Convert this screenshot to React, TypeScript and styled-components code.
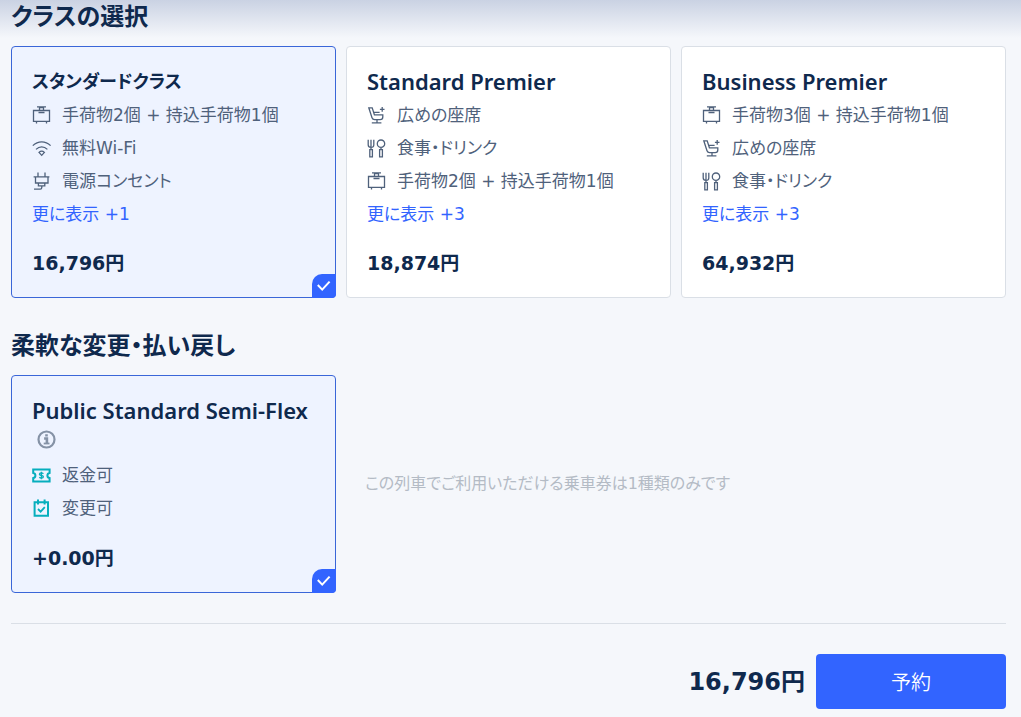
import React, { useState } from "react";
import styled, { createGlobalStyle } from "styled-components";

const navy = "#0f294d";
const slate = "#4f617b";
const blue = "#3264ff";
const teal = "#06aebd";

const GlobalStyle = createGlobalStyle`
  *, *::before, *::after { box-sizing: border-box; }
  body {
    margin: 0;
    background: #f5f7fb;
    color: ${navy};
    font-family: "DejaVu Sans", "Noto Sans CJK JP", sans-serif;
    font-feature-settings: "palt";
  }
  button { font: inherit; font-feature-settings: inherit; cursor: pointer; }
`;

const Page = styled.main`
  padding: 0 15px 8px 11px;
  background: linear-gradient(#cad2e3, #f5f7fb 38px);
`;

const Heading = styled.h2`
  margin: 0 0 13px;
  padding-top: 1px;
  font-size: 24px;
  line-height: 32px;
  font-weight: 700;
`;

const Section = styled.section`
  & + & {
    margin-top: 31px;
  }
`;

const Grid = styled.div`
  display: grid;
  grid-template-columns: repeat(3, minmax(0, 1fr));
  gap: 10px;
`;

const Card = styled.article<{ $selected: boolean }>`
  position: relative;
  display: flex;
  flex-direction: column;
  min-height: 218px;
  padding: 20px 20px 19px;
  border: 1px solid ${(p) => (p.$selected ? "#3a66d8" : "#dadfe6")};
  border-radius: 4px;
  background: ${(p) => (p.$selected ? "#eef3ff" : "#fff")};
`;

const CardTitle = styled.h3<{ $latin: boolean }>`
  display: flex;
  flex-wrap: wrap;
  margin: 0 0 4px;
  font-family: "Noto Sans", "Noto Sans CJK JP", sans-serif;
  font-size: ${(p) => (p.$latin ? 22 : 18)}px;
  line-height: 28px;
  font-weight: 600;
`;

const InfoButton = styled.button`
  display: flex;
  align-items: center;
  height: 31px;
  padding: 0 5px;
  border: 0;
  background: none;
  color: #8592a6;
`;

const Features = styled.ul`
  margin: 0;
  padding: 0;
  list-style: none;
`;

const Feature = styled.li<{ $accent?: boolean }>`
  display: flex;
  align-items: center;
  gap: 10px;
  height: 33px;
  font-size: 17px;
  line-height: 33px;
  color: ${slate};

  svg {
    flex: none;
    color: ${(p) => (p.$accent ? teal : slate)};
  }
`;

const MoreButton = styled.button`
  align-self: flex-start;
  height: 33px;
  padding: 0;
  border: 0;
  background: none;
  color: ${blue};
  font-size: 17px;
  line-height: 33px;
`;

const Price = styled.p`
  margin: auto 0 0;
  padding-top: 17px;
  font-size: 19px;
  line-height: 30px;
  font-weight: 700;
`;

const Tick = styled.div`
  position: absolute;
  right: -1px;
  bottom: -1px;
  display: grid;
  width: 24px;
  height: 24px;

  > * {
    grid-area: 1 / 1;
  }

  svg {
    place-self: center;
    color: #fff;
    pointer-events: none;
  }
`;

const Radio = styled.input`
  appearance: none;
  width: 24px;
  height: 24px;
  margin: 0;
  border-radius: 10px 0 4px 0;
  cursor: pointer;

  &:checked {
    background: ${blue};
  }
`;

const Note = styled.p`
  grid-column: 2 / -1;
  align-self: center;
  margin: 0;
  padding-left: 19px;
  font-size: 16px;
  line-height: 28px;
  color: #b4bbc5;
`;

const Footer = styled.footer`
  display: flex;
  justify-content: flex-end;
  align-items: center;
  gap: 11px;
  margin-top: 30px;
  padding-top: 30px;
  border-top: 1px solid #dadfe6;
`;

const Total = styled.strong`
  font-size: 24px;
  line-height: 32px;
  font-weight: 700;
`;

const BookButton = styled.button`
  width: 190px;
  height: 55px;
  border: 0;
  border-radius: 4px;
  background: ${blue};
  color: #fff;
  font-size: 20px;
  font-weight: 350;
`;

type IconName = "bag" | "wifi" | "plug" | "seat" | "meal" | "refund" | "change";

const drawings: Record<IconName, React.ReactNode> = {
  bag: (
    <>
      <path d="M1.500 4.500h16v10.800h-16z" />
      <path d="M7.500 4.500V1.500h4v3M5 .9h9M6.500 6.500h6M4.500 15.300v2.200M14.500 15.300v2.200" />
    </>
  ),
  wifi: (
    <>
      <path d="M.8 6.600C6 1.600 13.400 1.600 18.600 6.600M4 10.400c3.400-3.200 8-3.200 11.400 0" />
      <path d="M7 13.400c1.600-1.500 3.800-1.500 5.400 0L9.700 16.400z" />
    </>
  ),
  plug: (
    <>
      <path d="M6 .6v4.400M13 .6v4.400M1.600 4.800h15.800M3.500 4.800v6.200h12.500V4.800" />
      <path d="M6.400 11v2.800h6.400V11M9.800 13.800v1.800c0 1-.6 1.600-1.600 1.600H2" />
    </>
  ),
  seat: (
    <>
      <path d="M1.800 1.800h3.400l2.200 7h8.400v2.200c0 1.600-1 2.600-2.600 2.600H7.600c-1.400 0-2.200-.6-2.600-1.800z" />
      <path d="M6.600 6.400h6M15.200 1v4.800M12.900 3.400h4.600M10 13.600v2.800M4.800 16.800h9.600" />
    </>
  ),
  meal: (
    <>
      <path d="M1.200.8v5c0 1.600.8 2.600 2.800 2.600s2.800-1 2.800-2.600v-5M4 .8v9.600M2.800 10.600h2.600v7.200H2.800z" />
      <path d="M14 1a3.700 3.700 0 1 1 0 7.400A3.700 3.700 0 0 1 14 1zM14 8.400v2.200M12.600 10.600h2.800v7.200h-2.800z" />
    </>
  ),
  refund: (
    <>
      <path
        strokeWidth="2"
        d="M1.200 3.500h16.400v3.400c-1.400.2-2.200 1.200-2.200 2.600s.8 2.400 2.200 2.600v3.400H1.200v-3.400c1.400-.2 2.200-1.200 2.200-2.600S2.600 7.100 1.200 6.900z"
      />
      <path
        strokeWidth="1.300"
        d="M11.400 7.700c-.6-.6-1.200-.8-2-.8-1.200 0-2 .5-2 1.300 0 1.800 4 .8 4 2.600 0 .8-.8 1.300-2 1.300-.9 0-1.600-.3-2.100-.8M9.400 5.700v7.600"
      />
    </>
  ),
  change: (
    <>
      <path strokeWidth="2" d="M2.600 3.200h13.400v13.600H2.600zM6 .4v5M12.600.4v5" />
      <path strokeWidth="1.800" d="m6 10 2.600 2.600 4.200-4.400" />
    </>
  ),
};

const Icon = ({ name }: { name: IconName }) => (
  <svg
    width="20"
    height="20"
    viewBox="0 0 20 20"
    fill="none"
    stroke="currentColor"
    strokeWidth="1.300"
    aria-hidden="true"
  >
    {drawings[name]}
  </svg>
);

const InfoIcon = () => (
  <svg width="20" height="20" viewBox="0 0 20 20" fill="none" stroke="currentColor" aria-hidden="true">
    <circle cx="9.500" cy="9.500" r="8" strokeWidth="2.200" />
    <path strokeWidth="2.600" d="M9.500 4.200v2.400M7.100 8.500h2.800v5.200" />
    <path strokeWidth="1.800" d="M6.700 13.500h5.800" />
  </svg>
);

const CheckIcon = () => (
  <svg width="16" height="16" viewBox="0 0 16 16" fill="none" stroke="currentColor" strokeWidth="2" aria-hidden="true">
    <path d="m1.800 7 4.400 4.600 7.400-8" />
  </svg>
);

type FeatureItem = [IconName, string];

const classes: { title: string; latin: boolean; features: FeatureItem[]; more: string; price: string }[] = [
  {
    title: "スタンダードクラス",
    latin: false,
    features: [
      ["bag", "手荷物2個 + 持込手荷物1個"],
      ["wifi", "無料Wi-Fi"],
      ["plug", "電源コンセント"],
    ],
    more: "更に表示 +1",
    price: "16,796円",
  },
  {
    title: "Standard Premier",
    latin: true,
    features: [
      ["seat", "広めの座席"],
      ["meal", "食事・ドリンク"],
      ["bag", "手荷物2個 + 持込手荷物1個"],
    ],
    more: "更に表示 +3",
    price: "18,874円",
  },
  {
    title: "Business Premier",
    latin: true,
    features: [
      ["bag", "手荷物3個 + 持込手荷物1個"],
      ["seat", "広めの座席"],
      ["meal", "食事・ドリンク"],
    ],
    more: "更に表示 +3",
    price: "64,932円",
  },
];

const ticketFeatures: FeatureItem[] = [
  ["refund", "返金可"],
  ["change", "変更可"],
];

const FeatureList = ({ items, accent }: { items: FeatureItem[]; accent?: boolean }) => (
  <Features>
    {items.map(([icon, text]) => (
      <Feature key={text} $accent={accent}>
        <Icon name={icon} />
        {text}
      </Feature>
    ))}
  </Features>
);

const SelectTick = (props: { group: string; label: string; checked: boolean; onSelect: () => void }) => (
  <Tick>
    <Radio
      type="radio"
      name={props.group}
      aria-label={props.label}
      checked={props.checked}
      onChange={props.onSelect}
    />
    {props.checked && <CheckIcon />}
  </Tick>
);

export default function App() {
  const [selected, setSelected] = useState(0);

  return (
    <>
      <GlobalStyle />
      <Page>
        <Section>
          <Heading>クラスの選択</Heading>
          <Grid>
            {classes.map((c, i) => (
              <Card key={c.title} $selected={i === selected}>
                <CardTitle $latin={c.latin}>{c.title}</CardTitle>
                <FeatureList items={c.features} />
                <MoreButton type="button">{c.more}</MoreButton>
                <Price>{c.price}</Price>
                <SelectTick
                  group="class"
                  label={c.title}
                  checked={i === selected}
                  onSelect={() => setSelected(i)}
                />
              </Card>
            ))}
          </Grid>
        </Section>
        <Section>
          <Heading>柔軟な変更・払い戻し</Heading>
          <Grid>
            <Card $selected>
              <CardTitle $latin>
                Public Standard Semi-Flex
                <InfoButton type="button" aria-label="詳細">
                  <InfoIcon />
                </InfoButton>
              </CardTitle>
              <FeatureList items={ticketFeatures} accent />
              <Price>+0.00円</Price>
              <SelectTick group="ticket" label="Public Standard Semi-Flex" checked onSelect={() => {}} />
            </Card>
            <Note>この列車でご利用いただける乗車券は1種類のみです</Note>
          </Grid>
        </Section>
        <Footer>
          <Total>{classes[selected].price}</Total>
          <BookButton type="button">予約</BookButton>
        </Footer>
      </Page>
    </>
  );
}
